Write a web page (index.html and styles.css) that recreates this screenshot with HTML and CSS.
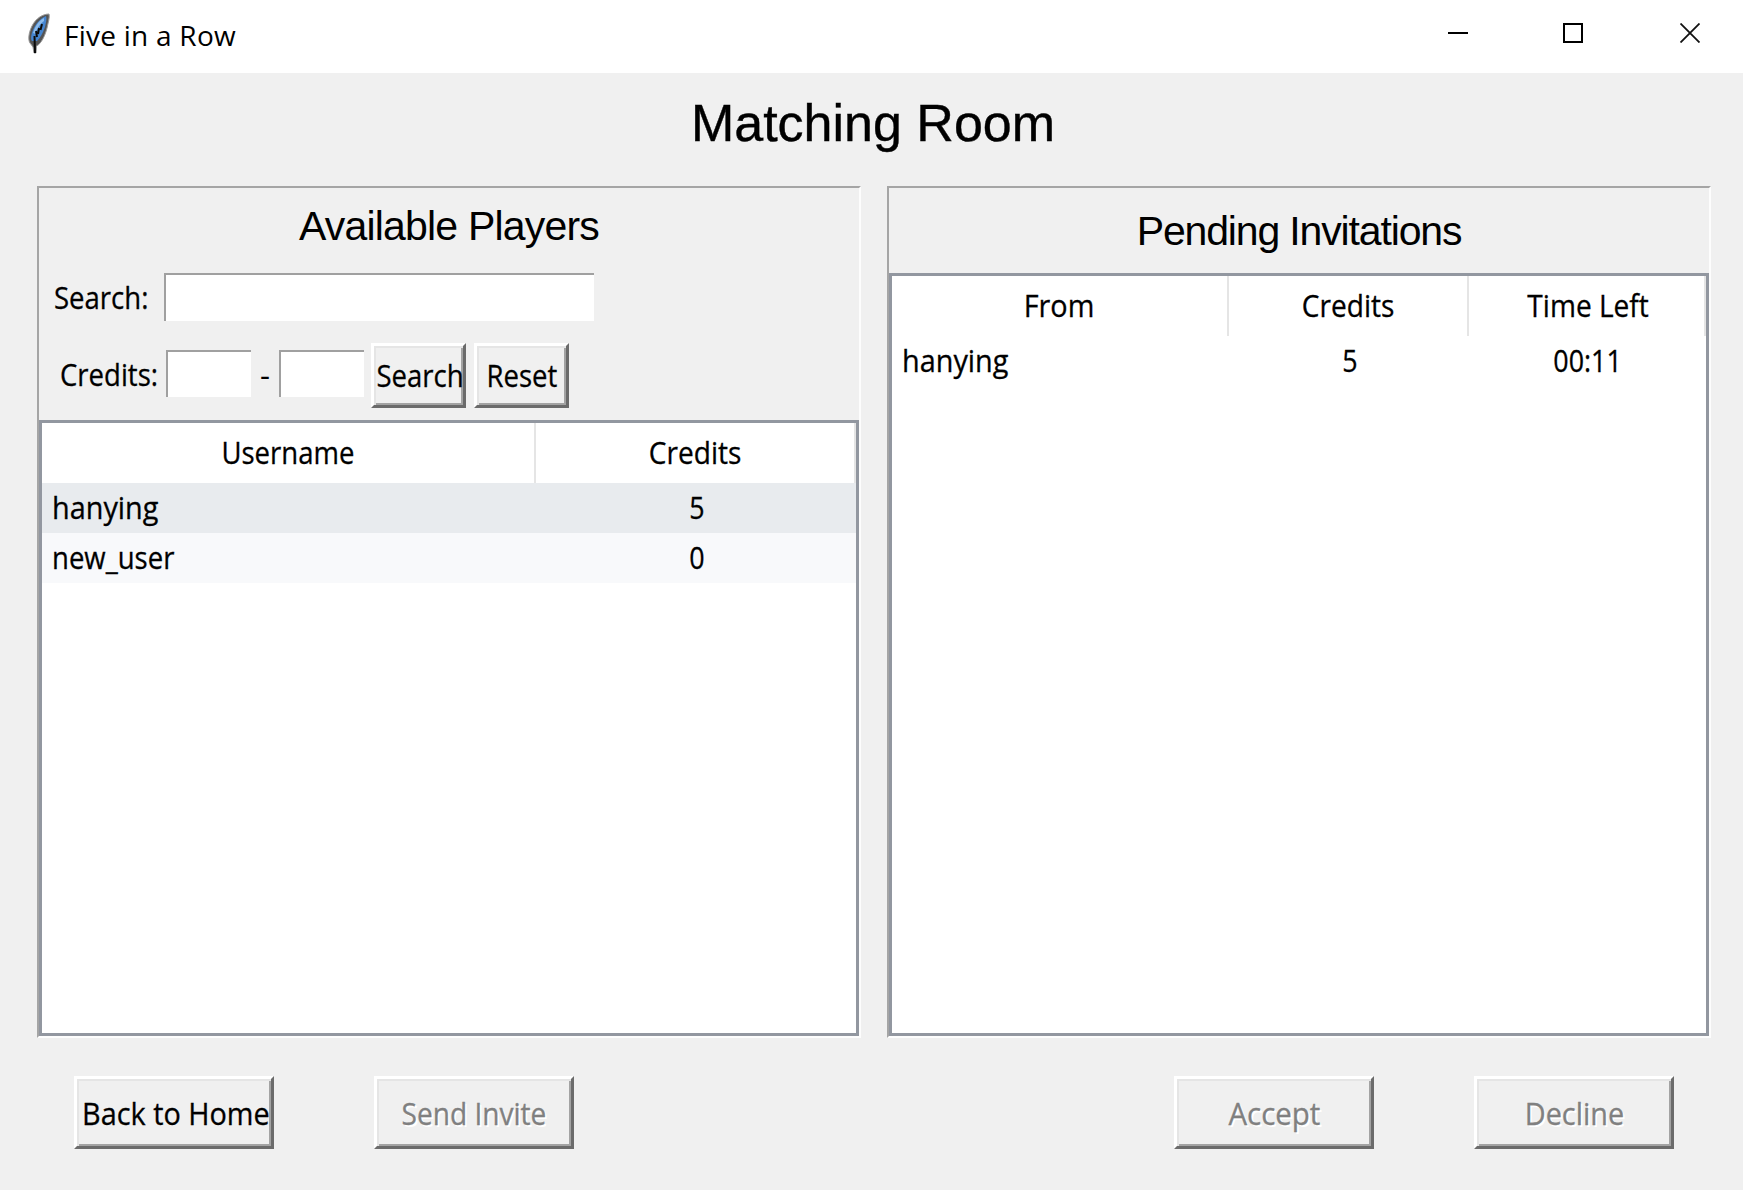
FILE: index.html
```html
<!DOCTYPE html>
<html lang="en">
<head>
<meta charset="utf-8">
<title>Five in a Row</title>
<link rel="stylesheet" href="styles.css">
</head>
<body>
<div class="window">
  <header class="titlebar">
    <svg class="feather" width="24" height="42" viewBox="0 0 24 42">
      <path d="M22 1 C16 1 9 5 5 13 C1.500 20 1 27 3 30 L6 34 L7 40 L9 40 L9.500 33 C14 31 18 23 20 15 C21 10 23 4 22 1 Z" fill="#555" stroke="#9a9a9a" stroke-width="1"/>
      <path d="M19 3 C14 5 9 10 6 17 C4 22 3.500 26 5 28 L10 28 C13 25 16 20 18 14 C19 9 20 6 19 3 Z" fill="#4585d0"/>
      <path d="M17 5 C11 8 8 14 6 20 L8.500 21 C10 16 12 12 17 8 Z" fill="#8dbbea"/>
      <path d="M15 11 L13.500 17 M12 15 L11 21 M9 18 L10 24 M7.500 23 L8 40" fill="none" stroke="#0b0b0b" stroke-width="2"/>
    </svg>
    <span class="caption">Five in a Row</span>
    <div class="controls">
      <svg class="minimize" width="20" height="20" viewBox="0 0 20 20"><path d="M0 10H20" stroke="#000" stroke-width="2"/></svg>
      <svg class="maximize" width="20" height="20" viewBox="0 0 20 20"><rect x="1" y="1" width="18" height="18" fill="none" stroke="#000" stroke-width="2"/></svg>
      <svg width="20" height="20" viewBox="0 0 20 20"><path d="M.5 .5L19.500 19.500M19.500 .5L.5 19.500" stroke="#111" stroke-width="1.800"/></svg>
    </div>
  </header>

  <h1 class="heading">Matching Room</h1>

  <main class="panels">
    <section class="panel">
      <h2 class="panel-title players">Available Players</h2>
      <div class="row search-row">
        <label class="field-label"><span class="tx narrow left">Search:</span></label>
        <div class="entry wide"></div>
      </div>
      <div class="row credits-row">
        <label class="field-label"><span class="tx narrow left">Credits:</span></label>
        <div class="entry"></div>
        <span class="dash">-</span>
        <div class="entry"></div>
        <button class="btn small snug"><span class="tx narrow">Search</span></button>
        <button class="btn small"><span class="tx narrow">Reset</span></button>
      </div>
      <div class="tree two">
        <div class="tr head"><div><span class="tx narrow">Username</span></div><div><span class="tx medium">Credits</span></div></div>
        <div class="tr hover"><div><span class="tx broad left">hanying</span></div><div><span class="tx digits">5</span></div></div>
        <div class="tr stripe"><div><span class="tx narrow left">new_user</span></div><div><span class="tx digits">0</span></div></div>
      </div>
    </section>
    <section class="panel">
      <h2 class="panel-title invites">Pending Invitations</h2>
      <div class="tree three">
        <div class="tr head"><div><span class="tx broad">From</span></div><div><span class="tx medium">Credits</span></div><div class="last"><span class="tx medium">Time Left</span></div></div>
        <div class="tr"><div><span class="tx broad left">hanying</span></div><div><span class="tx digits">5</span></div><div><span class="tx digits">00:11</span></div></div>
      </div>
    </section>
  </main>

  <footer class="actions">
    <button class="btn snug"><span class="tx broad">Back to Home</span></button>
    <button class="btn" disabled><span class="tx medium">Send Invite</span></button>
    <button class="btn right" disabled><span class="tx broader">Accept</span></button>
    <button class="btn" disabled><span class="tx broad">Decline</span></button>
  </footer>
</div>
</body>
</html>
```
FILE: styles.css
```css
* { box-sizing: border-box; }
body {
  margin: 0;
  background: #f0f0f0;
  color: #000;
  font: 31px/50px "Open Sans", "Noto Sans", sans-serif;
}
.window {
  width: 1743px;
  height: 1190px;
  overflow: hidden;
  display: flex;
  flex-direction: column;
}
.titlebar {
  height: 73px;
  background: #fff;
  display: flex;
  padding: 0 43px 0 27px;
}
.feather { margin-top: 13px; }
.caption {
  margin: 10px 0 0 13px;
  font-size: 28px;
  letter-spacing: 0.25px;
  white-space: nowrap;
}
.controls {
  margin-left: auto;
  margin-top: 23px;
  display: flex;
}
.minimize { margin-right: 95px; }
.maximize { margin-right: 97px; }
.heading {
  margin: 0;
  height: 113px;
  padding: 20px 0 0 3px;
  text-align: center;
  font: 400 52px/60px "Liberation Sans", Arial, sans-serif;
  -webkit-text-stroke: 0.4px;
}
.panels {
  display: flex;
  gap: 26px;
  padding-left: 37px;
}
.panel {
  width: 824px;
  height: 852px;
  border: 2px solid;
  border-color: #a5a5a5 #fdfdfd #fdfdfd #a5a5a5;
  display: flex;
  flex-direction: column;
}
.panel-title {
  margin: 0;
  text-align: center;
  white-space: nowrap;
  font: 400 41px/48px "Liberation Sans", Arial, sans-serif;
}
.players { height: 85px; padding-top: 14px; letter-spacing: -0.8px; }
.invites { height: 85px; padding-top: 19px; letter-spacing: -1.15px; }
.tx {
  display: inline-block;
  white-space: nowrap;
  -webkit-text-stroke: 0.3px;
}
.digits { transform: scaleX(0.865); }
.narrow { transform: scaleX(0.888); }
.medium { transform: scaleX(0.905); }
.broad { transform: scaleX(0.93); }
.broader { transform: scaleX(0.95); }
.left { transform-origin: left; }
.row { display: flex; }
.search-row { height: 77px; padding-left: 15px; line-height: 48px; }
.credits-row { height: 70px; padding-left: 21px; line-height: 49px; }
.search-row .field-label { width: 110px; }
.credits-row .field-label { width: 106px; }
.entry {
  width: 85px;
  height: 47px;
  background: #fff;
  border: solid;
  border-width: 2px 0 0 2px;
  border-color: #a0a0a0;
}
.wide { width: 430px; height: 48px; }
.dash { width: 28px; text-align: center; }
.btn {
  width: 200px;
  height: 73px;
  padding: 0;
  font: inherit;
  color: #000;
  background: #f0f0f0;
  border: 3px solid;
  border-color: #fff #6b6b6b #6b6b6b #fff;
  box-shadow: inset 2px 2px #e5e5e5, inset -2px -2px #a3a3a3;
  display: flex;
  justify-content: center;
  align-items: center;
}
.btn:disabled { color: #808080; text-shadow: 2px 2px #fff; }
.btn.small { width: 95px; height: 65px; margin: -7px 0 0 7px; }
.btn.small + .btn.small { margin-left: 8px; }
.snug { padding-left: 3px; }
.tree {
  flex: 1;
  background: #fff;
  border: 3px solid #9297a0;
}
.tr { display: grid; height: 50px; line-height: 48px; }
.two .tr { grid-template-columns: 494px 1fr; }
.three .tr { grid-template-columns: 337px 240px 1fr; }
.tr div { text-align: center; }
.tr div:not(:first-child) { padding-left: 1px; }
.tr:not(.head) div:first-child { text-align: left; padding-left: 10px; }
.head { height: 60px; line-height: 58px; }
.head div { border-right: 2px solid #e5e5e5; }
.head div.last { padding-left: 4px; }
.hover { background: #e8ebee; }
.stripe { background: #f8f9fb; }
.actions { display: flex; gap: 100px; padding: 38px 69px 0 74px; }
.right { margin-left: auto; }
```
